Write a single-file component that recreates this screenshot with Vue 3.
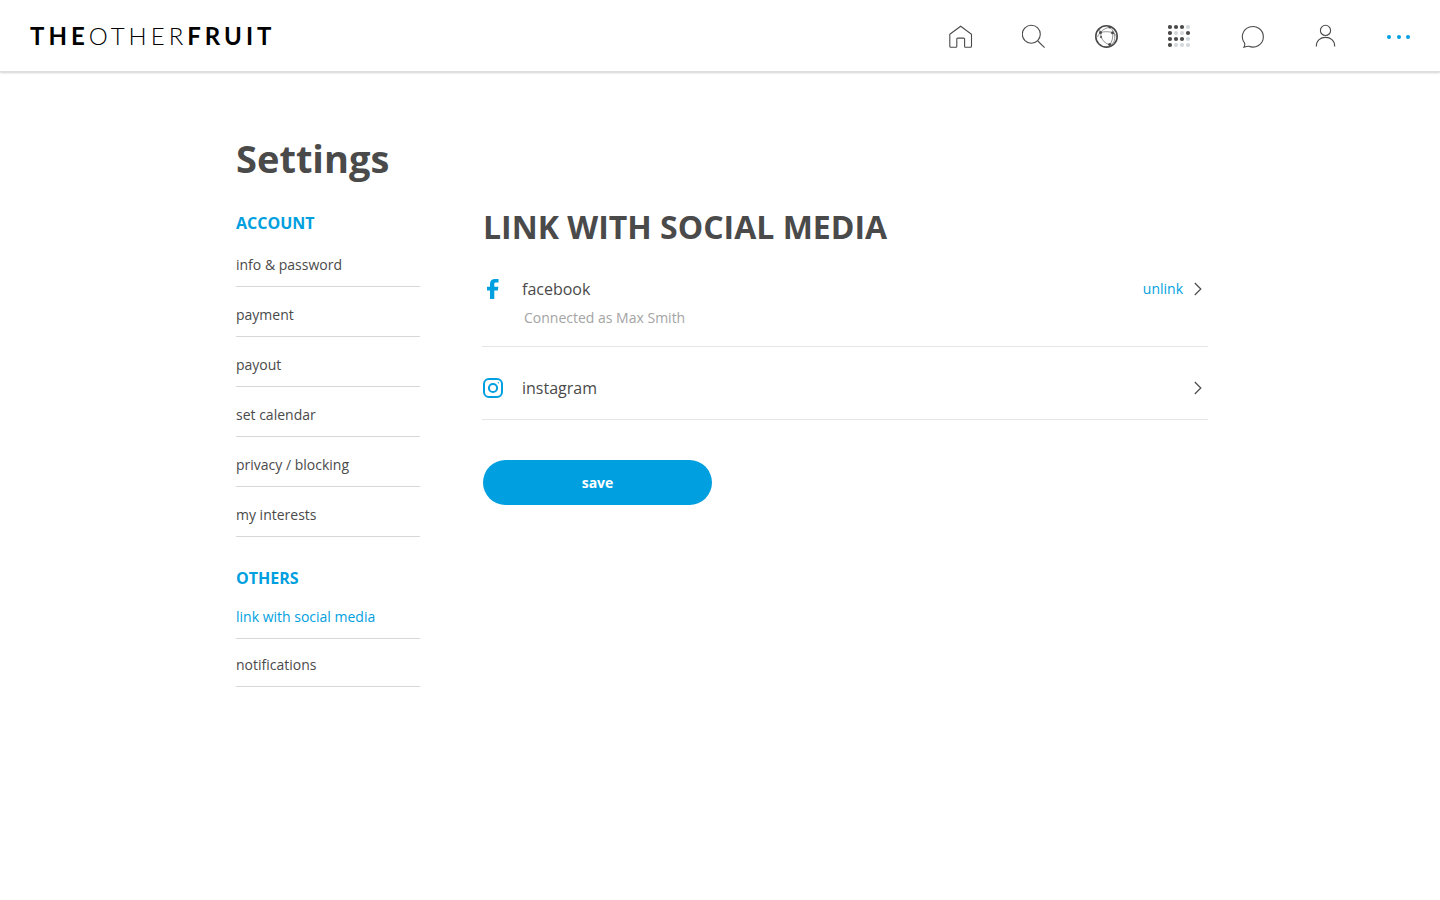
<script setup>
const accountLinks = [
  'info & password',
  'payment',
  'payout',
  'set calendar',
  'privacy / blocking',
  'my interests',
]
const otherLinks = [
  { label: 'link with social media', active: true },
  { label: 'notifications', active: false },
]

const dark = 'd'
const light = 'l'
const dotRows = [
  [dark, dark, dark, light],
  [dark, light, light, dark],
  [dark, dark, dark, light],
  [dark, light, light, light],
]
</script>

<template>
  <header class="topbar">
    <a class="logo" href="#"><b>THE</b><span>OTHER</span><b>FRUIT</b></a>
    <nav class="tools" aria-label="Main">
      <a href="#" aria-label="Home">
        <svg viewBox="0 0 24 24"><path d="M.8 10.2 11.7 2.2 22.5 10.2V22.3q0 1-1 1H16.3q-.7 0-.7-.8V15.1q0-1-1-1H8.8q-1 0-1 1V22.5q0 .8-.8.8H1.8q-1 0-1-1Z" /></svg>
      </a>
      <a href="#" aria-label="Search">
        <svg viewBox="0 0 24 24"><circle cx="9.3" cy="10.3" r="9" /><path d="m15.8 17 6.8 6.6" /></svg>
      </a>
      <a href="#" aria-label="Network">
        <svg viewBox="0 0 24 24">
          <circle class="ring" cx="11.5" cy="12.4" r="10.7" />
          <g class="mesh">
            <path d="M14.6 3.3C9.5 4 4.5 8 2.5 13" />
            <path d="M14.6 3.3C18.5 6 20.6 11 19.4 16.5 18.4 19.4 16.5 20.7 14.6 20.7" />
            <path d="M5.6 8.6C9 7.4 14 7.4 17.6 8.6 20 9.6 21 11 21.5 13" />
            <path d="M6.2 13C7.5 16.5 10 19.5 14.6 20.7" />
            <path d="M17.6 8.6C18.2 13 17.4 17.5 14.6 20.7" />
            <path d="M5.6 9 6.2 13" />
            <path d="M5.6 9 4.4 4.8" />
          </g>
          <g class="fill">
            <circle cx="14.8" cy="3.3" r="1.2" /><circle cx="5.5" cy="8.6" r="1.5" />
            <circle cx="17.5" cy="8.7" r="1.5" /><circle cx="6" cy="13" r="1" /><circle cx="14.7" cy="20.5" r="1.5" />
          </g>
        </svg>
      </a>
      <a href="#" aria-label="Calendar">
        <svg viewBox="0 0 24 24">
          <template v-for="(row, y) in dotRows" :key="y">
            <circle v-for="(tone, x) in row" :key="x" :class="['dot', tone]" :cx="2 + x * 6" :cy="3 + y * 6" r="2.1" />
          </template>
        </svg>
      </a>
      <a href="#" aria-label="Messages">
        <svg viewBox="0 0 24 24"><path d="M3.7 19.3A10.5 10.3 0 1 1 7.8 22.3C6 21.9 4.6 22.9 2.9 23.3 3.6 22.2 3.9 20.6 3.7 19.3Z" /></svg>
      </a>
      <a href="#" aria-label="Profile">
        <svg viewBox="0 0 24 24"><circle cx="11.5" cy="6.4" r="5.1" /><path d="M2.3 22.4C2.3 16.5 6.5 13.4 11.5 13.4S20.7 16.5 20.7 22.4" /></svg>
      </a>
      <button type="button" aria-label="More">
        <svg viewBox="0 0 24 24"><circle class="more" cx="2" cy="13" r="2" /><circle class="more" cx="12" cy="13" r="2" /><circle class="more" cx="21" cy="13" r="2" /></svg>
      </button>
    </nav>
  </header>

  <div class="page">
    <h1>Settings</h1>
    <div class="columns">
      <nav class="side" aria-label="Settings">
        <h3>ACCOUNT</h3>
        <ul class="account">
          <li v-for="label in accountLinks" :key="label"><a href="#">{{ label }}</a></li>
        </ul>
        <h3>OTHERS</h3>
        <ul class="others">
          <li v-for="item in otherLinks" :key="item.label">
            <a href="#" :class="{ active: item.active }">{{ item.label }}</a>
          </li>
        </ul>
      </nav>

      <main>
        <h2>LINK WITH SOCIAL MEDIA</h2>
        <section class="network facebook">
          <div class="line">
            <svg class="brand" viewBox="0 0 22 22"><path class="solid" d="M16.5 1V4.6H14.1C12.6 4.6 12.3 5.3 12.3 6.3V8.7H16.3L15.8 12.4H12.3V21H8V12.4H5V8.7H8V5.7C8 2.7 9.9 1 12.9 1Z" /></svg>
            <span class="name">facebook</span>
            <a class="unlink" href="#">unlink</a>
            <button type="button" aria-label="Open facebook">
              <svg viewBox="0 0 8 14"><path d="m.8 1 6 6-6 6" /></svg>
            </button>
          </div>
          <p>Connected as Max Smith</p>
        </section>
        <section class="network instagram">
          <div class="line">
            <svg class="brand" viewBox="0 0 22 22"><rect x="2" y="2" width="18" height="18" rx="5" /><circle cx="11" cy="11" r="4.1" /><circle class="solid" cx="16.4" cy="5.7" r=".7" /></svg>
            <span class="name">instagram</span>
            <button type="button" aria-label="Open instagram">
              <svg viewBox="0 0 8 14"><path d="m.8 1 6 6-6 6" /></svg>
            </button>
          </div>
        </section>
        <button type="button" class="save">save</button>
      </main>
    </div>
  </div>
</template>

<style>
body {
  background: #fff;
}
</style>

<style scoped>
.topbar,
.page {
  font-family: "Open Sans", sans-serif;
  color: #4a4a4a;
}
a {
  color: inherit;
  text-decoration: none;
}
button {
  font: inherit;
  padding: 0;
  border: 0;
  background: none;
  cursor: pointer;
}
svg {
  display: block;
  fill: none;
}
h1,
h2,
h3,
p,
ul {
  margin: 0;
  padding: 0;
}
ul {
  list-style: none;
}

.topbar {
  display: flex;
  align-items: center;
  justify-content: space-between;
  height: 71px;
  padding: 0 29px 0 30px;
  border-bottom: 1px solid #dedede;
  box-shadow: 0 1px 2px rgba(0, 0, 0, 0.18);
}
.logo {
  font-family: Lato, sans-serif;
  font-size: 24px;
  line-height: 32px;
  font-weight: 300;
  letter-spacing: 4px;
  padding-top: 1px;
  color: #000;
}
.logo b {
  font-weight: 700;
}
.tools {
  display: flex;
  gap: 49px;
}
.tools svg {
  width: 24px;
  height: 24px;
  stroke: #4a4a4a;
  stroke-width: 1.1;
}
.tools .ring {
  stroke-width: 1.6;
}
.tools .mesh {
  stroke-width: 0.6;
}
.tools .fill {
  fill: #4a4a4a;
  stroke: none;
}
.tools .dot {
  fill: #4a4a4a;
  stroke: none;
}
.tools .dot.l {
  fill: #d3d8dc;
}
.tools .more {
  fill: #009fe3;
  stroke: none;
}

.page {
  padding: 60px 232px 60px 236px;
}
h1 {
  font-size: 38px;
  line-height: 52px;
  font-weight: 700;
}
.columns {
  display: grid;
  grid-template-columns: 184px 1fr;
  gap: 62px;
  padding-top: 20px;
}
h3 {
  font-size: 16px;
  line-height: 24px;
  font-weight: 700;
  color: #009fe0;
  padding-top: 7px;
}
.side li {
  border-bottom: 1px solid #d8d8d8;
  font-size: 14px;
  line-height: 20px;
  padding-bottom: 11px;
}
.account {
  padding: 2px 0 22px;
}
.account li {
  padding-top: 18px;
}
.others {
  padding-top: 1px;
}
.others li {
  padding-top: 16px;
}
.active,
.unlink {
  color: #009fe0;
}

h2 {
  font-size: 32px;
  line-height: 46px;
  font-weight: 700;
  padding-left: 1px;
}
.network {
  border-bottom: 1px solid #e6e6e6;
  padding-right: 6px;
}
.facebook {
  padding-top: 28px;
  padding-bottom: 18px;
}
.instagram {
  padding-top: 30px;
  padding-bottom: 20px;
}
.line {
  display: flex;
  align-items: center;
  height: 22px;
}
.brand {
  width: 22px;
  height: 22px;
  margin-right: 18px;
  stroke: #009fe0;
  stroke-width: 2;
}
.solid {
  fill: #009fe0;
  stroke: none;
}
.name {
  flex: 1;
  font-size: 16px;
  line-height: 22px;
}
.unlink {
  font-size: 14px;
  line-height: 20px;
  margin-right: 11px;
}
.line button svg {
  width: 8px;
  height: 14px;
  stroke: #4a4a4a;
  stroke-width: 1.2;
}
.network p {
  padding: 8px 0 0 42px;
  font-size: 14px;
  line-height: 20px;
  color: #a4a4a4;
}
.save {
  display: block;
  width: 229px;
  height: 45px;
  margin: 40px 0 0 1px;
  border-radius: 23px;
  background: #009fe0;
  color: #fff;
  font-size: 14px;
  font-weight: 700;
}
</style>
